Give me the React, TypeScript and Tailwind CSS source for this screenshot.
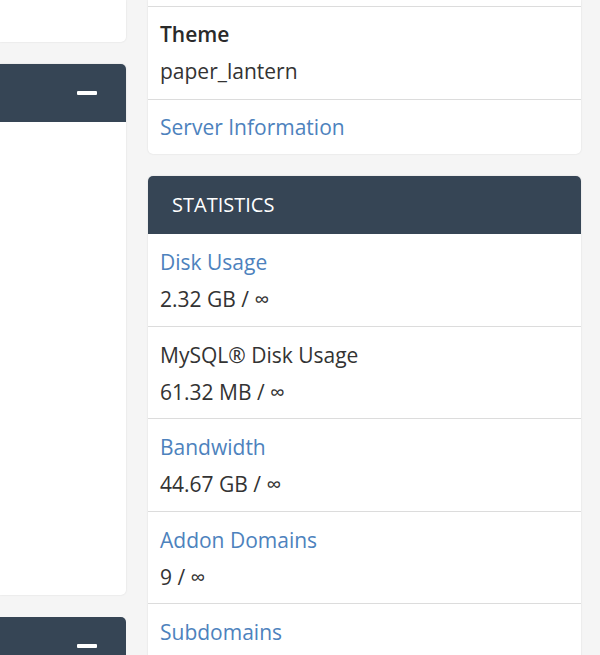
import React from "react";

// stat rows in the right column
const stats = [
  { label: "Disk Usage", value: "2.32 GB / ∞", link: true },
  { label: "MySQL® Disk Usage", value: "61.32 MB / ∞", link: false },
  { label: "Bandwidth", value: "44.67 GB / ∞", link: true },
  { label: "Addon Domains", value: "9 / ∞", link: true },
  { label: "Subdomains", value: "", link: true },
];

function Minus() {
  return <span className="block h-[4px] w-[20px] rounded-[1px] bg-white" />;
}

export default function App() {
  return (
    <div
      className="flex h-[655px] gap-[22px] overflow-hidden bg-[#f5f5f5] text-[#333]"
      style={{ fontFamily: "'Open Sans', sans-serif" }}
    >
      {/* left column, cut off on the left */}
      <div className="flex w-[126px] shrink-0 flex-col gap-[22px]">
        <div className="h-[42px] shrink-0 rounded-br-[5px] bg-white shadow-[0_0_2px_rgba(0,0,0,0.12)]" />
        <div className="flex shrink-0 flex-col rounded-r-[5px] bg-white shadow-[0_0_2px_rgba(0,0,0,0.12)]">
          <div className="flex h-[58px] items-center justify-end rounded-tr-[5px] bg-[#364555] pr-[29px]">
            <Minus />
          </div>
          <div className="h-[473px]" />
        </div>
        <div className="flex h-[58px] shrink-0 items-center justify-end rounded-tr-[5px] bg-[#364555] pr-[29px]">
          <Minus />
        </div>
      </div>

      {/* right column */}
      <div className="flex w-[433px] shrink-0 flex-col gap-[22px]">
        <div className="shrink-0 rounded-b-[5px] bg-white text-[21px] shadow-[0_0_2px_rgba(0,0,0,0.12)]">
          <div className="h-[7px] border-b border-[#dcdcdc]" />
          <div className="border-b border-[#dcdcdc] px-[12px] pt-[12px] pb-[11px]">
            <div className="font-semibold leading-[31.5px] text-[#2a2a2a]">Theme</div>
            <div className="mt-[5.5px] leading-[31.5px]">paper_lantern</div>
          </div>
          <div className="px-[12px] pt-[12px] pb-[11px] leading-[31.5px] text-[#4d82bd]">
            Server Information
          </div>
        </div>

        <div className="shrink-0 rounded-t-[5px] bg-white text-[21px] shadow-[0_0_2px_rgba(0,0,0,0.12)]">
          <div className="flex h-[58px] items-center rounded-t-[5px] bg-[#364555] pl-[24px] text-[20px] text-white uppercase">
            Statistics
          </div>
          {stats.map((s, i) => (
            <div
              key={i}
              className="border-b border-[#dcdcdc] px-[12px] pt-[13px] pb-[10px]"
            >
              <div className={`leading-[31.5px] ${s.link ? "text-[#4d82bd]" : "text-[#333]"}`}>
                {s.label}
              </div>
              <div className="mt-[5.5px] leading-[31.5px]">{s.value}</div>
            </div>
          ))}
        </div>
      </div>
    </div>
  );
}
